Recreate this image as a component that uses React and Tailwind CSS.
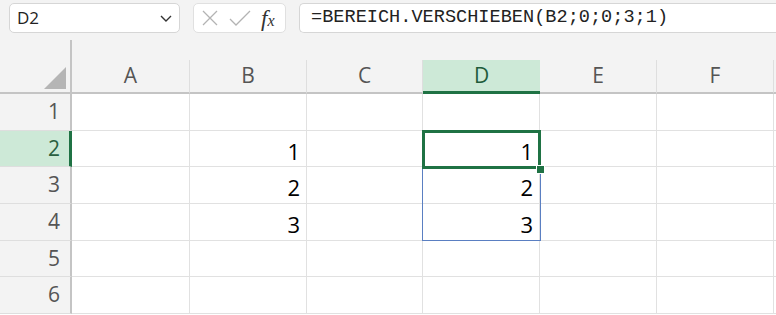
import React from "react";

const cols = ["A", "B", "C", "D", "E", "F", ""];
const rows = [
  { n: 1, h: "h-[37px]", vals: {} },
  { n: 2, h: "h-[36px]", vals: { B: "1", D: "1" } },
  { n: 3, h: "h-[37px]", vals: { B: "2", D: "2" } },
  { n: 4, h: "h-[37px]", vals: { B: "3", D: "3" } },
  { n: 5, h: "h-[36px]", vals: {} },
  { n: 6, h: "h-[37px]", vals: {} },
];

const font = { fontFamily: "'Open Sans', 'Liberation Sans', sans-serif" };

export default function App() {
  return (
    <div className="w-[776px] h-[315px] overflow-hidden bg-white" style={font}>
      {/* formula bar */}
      <div className="h-[36px] bg-[#f3f3f3] flex items-center pl-[9px] gap-[13px]">
        <div className="w-[171px] h-[30px] bg-white border border-[#d6d6d6] rounded-[5px] flex items-center justify-between pl-[7px] pr-[6px]">
          <span className="text-[17px] text-[#222]">D2</span>
          <svg width="14" height="10" viewBox="0 0 14 10">
            <path d="M2 3 L7 8 L12 3" fill="none" stroke="#333" strokeWidth="1.4" />
          </svg>
        </div>
        <div className="w-[93px] h-[30px] bg-white border border-[#e0e0e0] rounded-[5px] flex items-center pl-[7px] gap-[10px]">
          <svg width="18" height="18" viewBox="0 0 18 18">
            <path d="M2 2 L16 16 M16 2 L2 16" stroke="#b3b3b3" strokeWidth="1.3" fill="none" />
          </svg>
          <svg width="22" height="18" viewBox="0 0 22 18">
            <path d="M1 10 L7 16 L21 2" stroke="#b3b3b3" strokeWidth="1.3" fill="none" />
          </svg>
          <span className="text-[23px] leading-none text-[#333] italic" style={{ fontFamily: "'Liberation Serif', serif" }}>
            f<span className="text-[16px]">x</span>
          </span>
        </div>
        <div className="flex-1 h-[30px] bg-white border border-[#d6d6d6] rounded-l-[5px] border-r-0 flex items-center pl-[11px]">
          <span className="text-[18.6px] text-[#222]" style={{ fontFamily: "'Liberation Mono', monospace" }}>
            =BEREICH.VERSCHIEBEN(B2;0;0;3;1)
          </span>
        </div>
      </div>

      {/* gap above headers */}
      <div className="h-[24px] bg-[#f3f3f3] flex">
        <div className="w-[72px] mt-[4px] border-r-2 border-[#c4c4c4]" />
      </div>

      <div className="relative">
        <div className="grid grid-cols-[72px_118px_117px_116px_117px_117px_117px_1fr]">
          {/* header row */}
          <div className="h-[34px] bg-[#f3f3f3] border-r-2 border-b-2 border-[#c4c4c4] flex items-end justify-end pr-[4px] pb-[3px]">
            <svg width="22" height="22" viewBox="0 0 22 22">
              <path d="M0 22 L22 22 L22 0 Z" fill="#b5b5b5" />
            </svg>
          </div>
          {cols.map((c, i) =>
            c === "D" ? (
              <div key={i} className="h-[34px] bg-[#cde9d7] border-b-[3px] border-[#1f7244] flex items-center justify-center text-[21px] text-[#1f5c3a]">
                {c}
              </div>
            ) : (
              <div key={i} className="h-[34px] bg-[#f3f3f3] border-r border-b-2 border-r-[#dedede] border-b-[#c4c4c4] flex items-center justify-center text-[21px] text-[#555]">
                {c}
              </div>
            )
          )}

          {rows.map((r) => (
            <React.Fragment key={r.n}>
              {r.n === 2 ? (
                <div className={`${r.h} bg-[#cde9d7] border-r-[3px] border-b border-r-[#1f7244] border-b-[#dedede] flex items-center justify-end pr-[9px] text-[21px] text-[#2a5f40]`}>
                  {r.n}
                </div>
              ) : (
                <div className={`${r.h} bg-[#f3f3f3] border-r-2 border-b border-r-[#c4c4c4] border-b-[#dedede] flex items-center justify-end pr-[10px] text-[21px] text-[#555]`}>
                  {r.n}
                </div>
              )}
              {cols.map((c, i) => (
                <div key={i} className={`${r.h} border-r border-b border-[#e1e1e1] flex items-center justify-end pr-[6px] pt-[5px] text-[22px] text-black`}>
                  {r.vals[c] || ""}
                </div>
              ))}
            </React.Fragment>
          ))}
        </div>

        {/* selection overlays */}
        <div className="absolute left-[422px] top-[108px] w-[119px] h-[73px] border border-[#5a7fc2] border-t-0 pointer-events-none" />
        <div className="absolute left-[422px] top-[70px] w-[119px] h-[39px] border-[3px] border-[#1f7244] pointer-events-none" />
        <div className="absolute left-[536px] top-[105px] w-[9px] h-[9px] bg-[#1f7244] border border-white pointer-events-none" />
      </div>
    </div>
  );
}
